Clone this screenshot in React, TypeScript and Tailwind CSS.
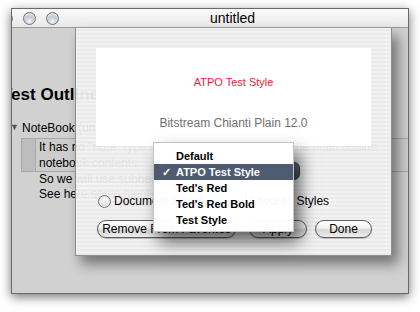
import React from "react";

const Light = () => (
  <span className="w-[13px] h-[13px] shrink-0 rounded-full border border-[#6f757c] bg-[radial-gradient(circle_at_50%_75%,#f5f7f9_0%,#b9c0c8_55%,#7f8891_100%)] shadow-[inset_0_2px_2px_rgba(255,255,255,0.8)]" />
);

const Radio = () => (
  <span className="w-[13px] h-[13px] shrink-0 rounded-full border border-[#7c7c7c] bg-[linear-gradient(180deg,#ffffff,#dcdcdc)] shadow-[inset_0_1px_1px_rgba(0,0,0,0.15)]" />
);

const AquaButton = ({ label, width }: { label: string; width: string }) => (
  <div
    className={`${width} h-[18px] shrink-0 rounded-full border border-[#5c5c5c] bg-[linear-gradient(180deg,#ffffff_0%,#f2f2f2_45%,#d6d6d6_55%,#eeeeee_100%)] flex items-center justify-center text-[12px] leading-none text-black shadow-[0_1px_1px_rgba(0,0,0,0.2)]`}
  >
    {label}
  </div>
);

const menuItems = ["Default", "ATPO Test Style", "Ted's Red", "Ted's Red Bold", "Test Style"];

export default function App() {
  return (
    <div className="w-[420px] h-[312px] bg-white overflow-hidden pt-[8px] pl-[11px] font-['Liberation_Sans',Arial,sans-serif]">
      {/* Window */}
      <div className="w-[398px] h-[286px] flex flex-col border border-[#6a6a6a] shadow-[0_3px_10px_rgba(0,0,0,0.55)] overflow-hidden">
        {/* Title bar */}
        <div className="h-[19px] shrink-0 flex items-center bg-[linear-gradient(180deg,#fafafa,#e9e9e9)] border-b border-[#9c9c9c]">
          <div className="flex items-center gap-[10px] ml-[-12px]">
            <Light />
            <Light />
            <Light />
          </div>
          <span className="ml-[151px] text-[14px] leading-none text-black">untitled</span>
        </div>

        {/* Body */}
        <div className="relative flex-1 bg-[#d1d1d1] text-black">
          {/* Document underneath */}
          <div className="pt-[57px] ml-[-10px] text-[17px] leading-[20px] font-bold whitespace-nowrap">
            Test Outline
          </div>
          <div className="mt-[15px] flex items-center h-[16px] ml-[-2px] text-[12px] whitespace-nowrap">
            <span className="text-[9px] text-[#555] w-[12px]">▼</span>
            <span>NoteBook (unicode)</span>
          </div>
          <div className="mt-[2px] ml-[9px] mr-[-8px] flex border border-[#a9a9a9] bg-[#cdcdcd]">
            <div className="w-[14px] shrink-0 bg-[#bdbdbd] border-r border-[#a9a9a9]" />
            <div className="pl-[3px] text-[12px] leading-[16px] whitespace-nowrap">
              <div>It has no "note" type so it shows the notes here the main outline</div>
              <div>notebook contents.</div>
            </div>
          </div>
          <div className="ml-[27px] text-[12px] leading-[15px] whitespace-nowrap">
            <div>So we will use subheads for notes instead.</div>
            <div>See here some highlighted text.</div>
          </div>

          {/* Sheet */}
          <div className="absolute left-[63px] top-0 w-[317px] h-[228px] border-l border-r border-b border-[#8e8e8e] bg-[repeating-linear-gradient(0deg,rgba(236,236,236,0.94)_0px,rgba(236,236,236,0.94)_2px,rgba(245,245,245,0.94)_2px,rgba(245,245,245,0.94)_4px)] shadow-[6px_8px_12px_rgba(0,0,0,0.45)] flex flex-col">
            <div className="mt-[20px] mx-[20px] h-[98px] bg-white flex flex-col items-center">
              <span className="mt-[27px] text-[11px] leading-[14px] text-[#f0203a]">ATPO Test Style</span>
              <span className="mt-[26px] text-[12px] leading-[16px] text-[#6f6f6f]">Bitstream Chianti Plain 12.0</span>
            </div>
            <div className="mt-[16px] ml-[85px] w-[139px] h-[18px] rounded-[6px] bg-[linear-gradient(180deg,#6a7486,#454f61)] border border-[#3a3f48]" />
            <div className="mt-[13px] ml-[22px] h-[16px] flex items-center text-[12px] whitespace-nowrap">
              <Radio />
              <span className="ml-[3px]">Document Styles</span>
              <span className="ml-[40px]"><Radio /></span>
              <span className="ml-[3px]">Favorite Styles</span>
            </div>
            <div className="mt-[11px] ml-[21px] flex items-center">
              <AquaButton label="Remove From Favorites" width="w-[139px]" />
              <div className="ml-[13px]">
                <AquaButton label="Apply" width="w-[58px]" />
              </div>
              <div className="ml-[8px]">
                <AquaButton label="Done" width="w-[57px]" />
              </div>
            </div>

            {/* Popup menu */}
            <div className="absolute left-[77px] top-[114px] w-[141px] pt-[5px] pb-[3px] bg-[rgba(255,255,255,0.97)] border border-[#c4c4c4] shadow-[6px_10px_16px_rgba(0,0,0,0.6)]">
              {menuItems.map((item, i) => (
                <div
                  key={item}
                  className={
                    i === 1
                      ? "h-[16px] flex items-center bg-[#4f5b71] text-white text-[11px] font-bold whitespace-nowrap"
                      : "h-[16px] flex items-center text-black text-[11px] font-bold whitespace-nowrap"
                  }
                >
                  <span className="w-[22px] pl-[8px] text-[11px]">{i === 1 ? "✓" : ""}</span>
                  <span>{item}</span>
                </div>
              ))}
            </div>
          </div>
        </div>
      </div>
    </div>
  );
}
